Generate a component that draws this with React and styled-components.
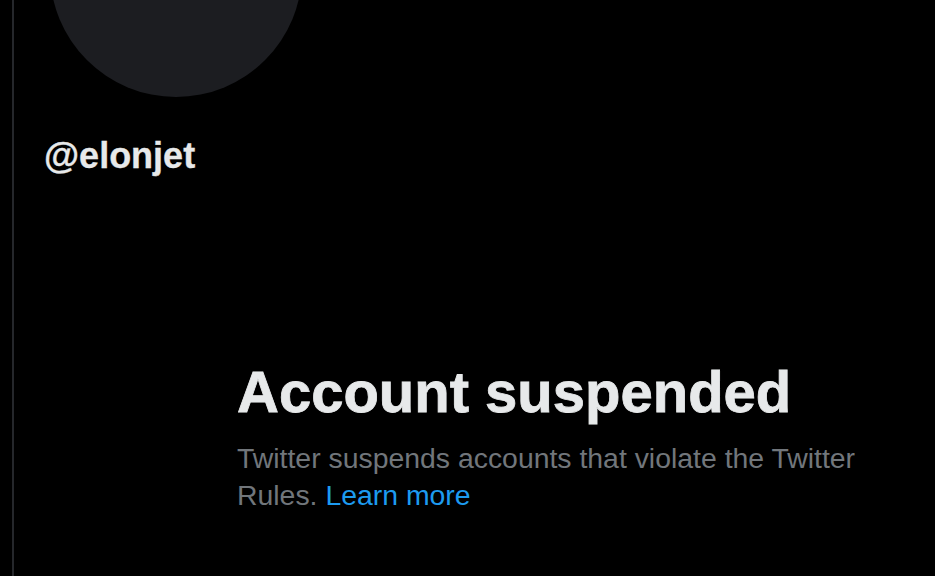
import React from 'react'
import styled, { createGlobalStyle } from 'styled-components'

const GlobalStyle = createGlobalStyle`
  html, body {
    margin: 0;
    padding: 0;
    background: #000000;
  }
  body {
    font-family: 'Liberation Sans', Arial, sans-serif;
  }
`

const Page = styled.div`
  display: flex;
  width: 935px;
  height: 576px;
  overflow: hidden;
  background: #000000;
`

const Column = styled.main`
  display: flex;
  flex-direction: column;
  align-items: flex-start;
  margin-left: 12px;
  padding-left: 30px;
  border-left: 2px solid #25272b;
  flex: 1;
`

const Avatar = styled.div`
  width: 252px;
  height: 252px;
  border-radius: 50%;
  margin-top: -155px;
  margin-left: 6px;
  background: #1c1d21;
  flex-shrink: 0;
`

const Handle = styled.div`
  margin-top: 39px;
  font-size: 36px;
  line-height: 40px;
  font-weight: 700;
  color: #e7e9ea;
  -webkit-text-stroke: 0.3px #e7e9ea;
`

const Notice = styled.section`
  margin-top: 184px;
  margin-left: 193px;
  width: 650px;
`

const Title = styled.h1`
  margin: 0;
  font-size: 58px;
  line-height: 64px;
  font-weight: 700;
  color: #e7e9ea;
  -webkit-text-stroke: 0.8px #e7e9ea;
`

const Text = styled.p`
  margin: 16px 0 0;
  font-size: 28.4px;
  line-height: 37px;
  color: #71767b;
`

const Link = styled.span`
  color: #1d9bf0;
  cursor: pointer;
`

const App = () => {
  return (
    <>
      <GlobalStyle />
      <Page>
        <Column>
          <Avatar />
          <Handle>@elonjet</Handle>
          <Notice>
            <Title>Account suspended</Title>
            <Text>
              <span>Twitter suspends accounts that violate the Twitter</span>{' '}
              <span>Rules.</span> <Link>Learn more</Link>
            </Text>
          </Notice>
        </Column>
      </Page>
    </>
  )
}

export default App
